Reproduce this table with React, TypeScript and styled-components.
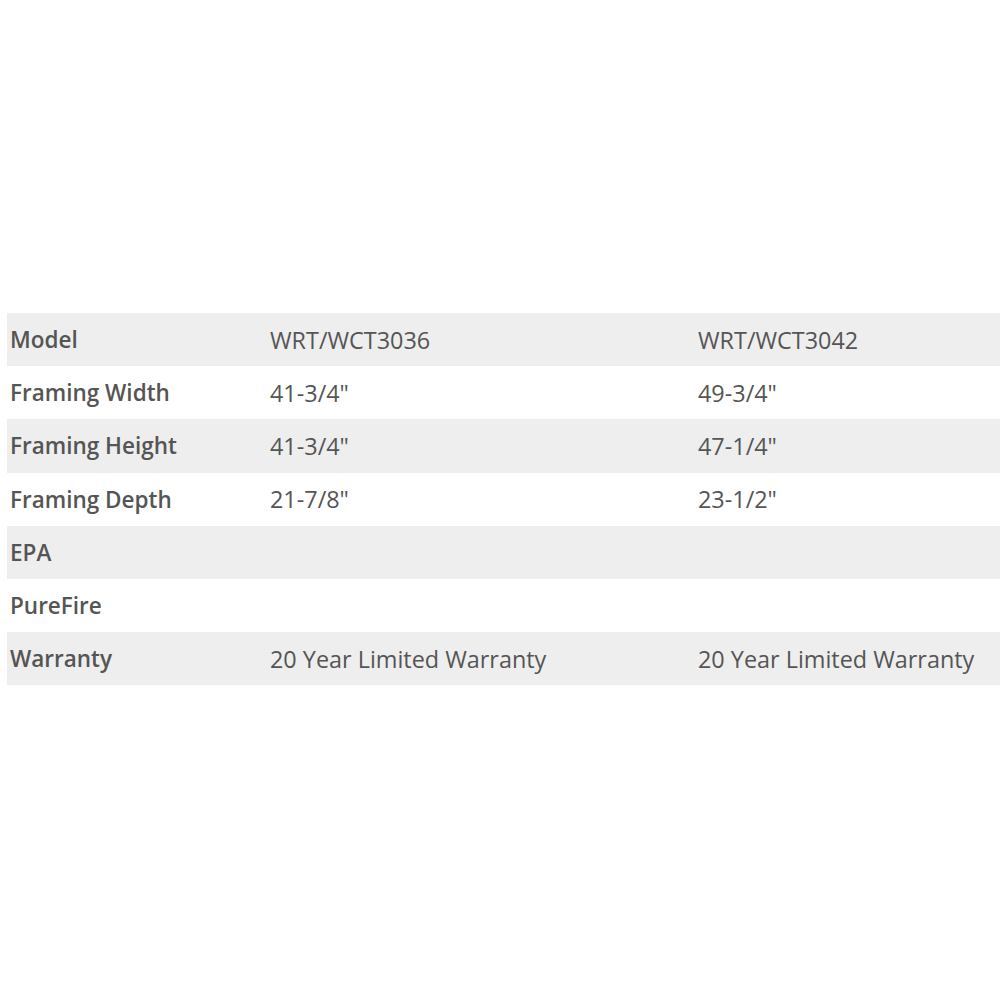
import styled, { createGlobalStyle } from "styled-components";

const GlobalStyle = createGlobalStyle`
  html, body {
    margin: 0;
    padding: 0;
    background: #ffffff;
  }
  body {
    font-family: "Open Sans", "Noto Sans", "DejaVu Sans", sans-serif;
  }
`;

interface Spec {
  label: string;
  a: string;
  b: string;
}

const specs: Spec[] = [
  { label: "Model", a: "WRT/WCT3036", b: "WRT/WCT3042" },
  { label: "Framing Width", a: '41-3/4"', b: '49-3/4"' },
  { label: "Framing Height", a: '41-3/4"', b: '47-1/4"' },
  { label: "Framing Depth", a: '21-7/8"', b: '23-1/2"' },
  { label: "EPA", a: "", b: "" },
  { label: "PureFire", a: "", b: "" },
  { label: "Warranty", a: "20 Year Limited Warranty", b: "20 Year Limited Warranty" },
];

const Page = styled.div`
  width: 1000px;
  height: 1001px;
  padding: 313px 0 0 7px;
  box-sizing: border-box;
`;

const SpecTable = styled.table`
  width: 993px;
  border-collapse: collapse;
  table-layout: fixed;
`;

const Row = styled.tr<{ $shaded: boolean }>`
  height: 53.2px;
  background: ${(p) => (p.$shaded ? "#eeeeee" : "#ffffff")};
`;

const Cell = styled.td<{ $w?: number; $label?: boolean }>`
  width: ${(p) => (p.$w ? `${p.$w}px` : "auto")};
  padding: 0 0 0 ${(p) => (p.$label ? 3 : 0)}px;
  font-size: ${(p) => (p.$label ? 22.5 : 23.4)}px;
  font-weight: ${(p) => (p.$label ? 600 : 400)};
  color: #555555;
  vertical-align: middle;
  white-space: nowrap;
`;

export default function App() {
  return (
    <Page>
      <GlobalStyle />
      <SpecTable>
        <tbody>
          {specs.map((s, i) => (
            <Row key={s.label} $shaded={i % 2 === 0}>
              <Cell $w={260} $label>
                {s.label}
              </Cell>
              <Cell $w={428}>{s.a}</Cell>
              <Cell>{s.b}</Cell>
            </Row>
          ))}
        </tbody>
      </SpecTable>
    </Page>
  );
}
